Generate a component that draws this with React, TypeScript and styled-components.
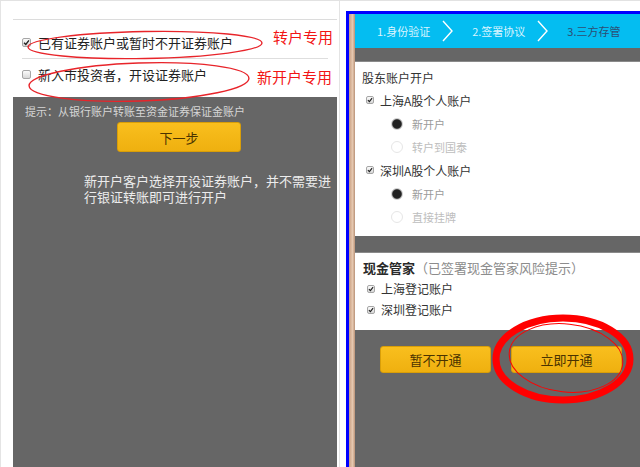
import React from 'react';
import styled, { createGlobalStyle } from 'styled-components';

/** Style */

const GlobalStyle = createGlobalStyle`
  html, body {
    margin: 0;
    padding: 0;
    background: #fff;
    overflow: hidden;
  }
  body {
    font-family: "Noto Sans CJK SC", "Liberation Sans", sans-serif;
    -webkit-font-smoothing: antialiased;
  }
`;

const Stage = styled.div`
  position: relative;
  width: 640px;
  height: 467px;
  overflow: hidden;
  display: flex;
  flex-flow: row nowrap;
  border-top: 1px solid #e2e2e2;
  box-sizing: border-box;
`;

/* ---- left screenshot ---- */

const LeftShot = styled.div`
  width: 345px;
  height: 100%;
  box-sizing: border-box;
  border-left: 1px solid #e4e4e4;
  padding: 0 8px 0 12px;
  display: flex;
  flex-direction: column;
  box-shadow: inset -5px 0 0 #fff, inset -6px 0 0 #e4e4e4;
`;

const TopSpace = styled.div`
  height: 18px;
  border-bottom: 1px solid #dcdcdc;
`;

const OptionRow = styled.label<{ $pad: string; $line?: boolean }>`
  display: flex;
  align-items: center;
  gap: 7px;
  height: ${(p) => (p.$line ? 39 : 38)}px;
  padding: ${(p) => p.$pad};
  margin: 0 9px;
  box-sizing: border-box;
  border-bottom: ${(p) => (p.$line ? '1px solid #dedede' : 'none')};
  font-size: 13px;
  color: #222;
  white-space: nowrap;
`;

const GrayPanel = styled.div`
  flex: 1;
  background: #666;
  padding: 7px 0 0 0;
  display: flex;
  flex-direction: column;
`;

const Tip = styled.div`
  padding-left: 12px;
  font-size: 11px;
  line-height: 14px;
  color: #d6d6d6;
`;

const YellowButton = styled.button<{ $w: number; $h: number }>`
  width: ${(p) => p.$w}px;
  height: ${(p) => p.$h}px;
  padding: 0;
  border: 1px solid #d99e08;
  border-radius: 3px;
  background: linear-gradient(#f9bf1e, #efb00f);
  color: #4a3300;
  font-family: inherit;
  font-size: 13px;
  cursor: pointer;
`;

const NextWrap = styled.div`
  margin: 4px 0 0 104px;
`;

const Explain = styled.p`
  margin: 21px 0 0 71px;
  width: 250px;
  font-size: 13px;
  line-height: 16px;
  color: #ececec;
`;

/* ---- right screenshot ---- */

const RightShot = styled.div`
  width: 295px;
  height: 100%;
  padding: 10px 0 0 1px;
  box-sizing: border-box;
  display: flex;
  background: #fff;
`;

const Frame = styled.div`
  flex: 1;
  min-width: 0;
  border-top: 3px solid #0000ff;
  border-left: 3px solid #0000ff;
  display: flex;
`;

const TanStripe = styled.div`
  width: 6px;
  flex-shrink: 0;
  background: linear-gradient(90deg, #c89e80, #e6c8b0 60%, #b99277);
`;

const Phone = styled.div`
  flex: 1;
  min-width: 0;
  display: flex;
  flex-direction: column;
  background: #666;
`;

const StepBar = styled.div`
  height: 34px;
  background: #04bdf1;
  display: flex;
  align-items: center;
  padding-left: 22px;
  overflow: hidden;
`;

const Step = styled.span<{ $current?: boolean }>`
  font-size: 11px;
  color: ${(p) => (p.$current ? '#2d4d73' : '#d9f4ff')};
  white-space: nowrap;
`;

const Chevron = styled.svg`
  width: 11px;
  height: 22px;
  margin: 0 19px 0 12px;
  flex-shrink: 0;
`;

const GrayGap = styled.div<{ $h: number }>`
  height: ${(p) => p.$h}px;
  background: #666;
  border-bottom: 1px solid #8a8a8a;
  box-sizing: border-box;
`;

const WhiteBlock = styled.div<{ $pad: string }>`
  background: #fff;
  padding: ${(p) => p.$pad};
`;

const BlockTitle = styled.div`
  font-size: 12px;
  line-height: 16px;
  color: #333;
  white-space: nowrap;

  b {
    font-size: 13px;
    color: #2a2a2a;
  }

  span {
    font-size: 13px;
    color: #8c8c8c;
  }
`;

const CheckLine = styled.div<{ $h: number }>`
  display: flex;
  align-items: center;
  gap: 6px;
  height: ${(p) => p.$h}px;
  padding-left: 4px;
  font-size: 12px;
  color: #333;
`;

const RadioLine = styled.div<{ $muted?: boolean }>`
  display: flex;
  align-items: center;
  gap: 9px;
  height: 23px;
  padding-left: 29px;
  font-size: 11px;
  color: ${(p) => (p.$muted ? '#bdbdbd' : '#9a9a9a')};
`;

const Radio = styled.span<{ $on?: boolean }>`
  width: 12px;
  height: 12px;
  border-radius: 50%;
  box-sizing: border-box;
  background: ${(p) => (p.$on ? 'radial-gradient(circle, #222 55%, #555 70%, #ddd 100%)' : '#fff')};
  border: 1px solid ${(p) => (p.$on ? '#cfcfcf' : '#e6e6e6')};
`;

const BottomArea = styled.div`
  flex: 1;
  background: #666;
  display: flex;
  gap: 20px;
  padding: 16px 0 0 25px;
  align-items: flex-start;
`;

const BoxWrap = styled.span<{ $size: number }>`
  width: ${(p) => p.$size}px;
  height: ${(p) => p.$size}px;
  box-sizing: border-box;
  border: 1px solid #a6a6a6;
  border-radius: 2px;
  background: linear-gradient(#fbfbfb, #d8d8d8);
  display: inline-flex;
  align-items: center;
  justify-content: center;
  flex-shrink: 0;
`;

/* ---- annotation layer ---- */

const Marks = styled.svg`
  position: absolute;
  left: 0;
  top: 0;
  pointer-events: none;
`;

const RedNote = styled.span<{ $x: number; $y: number }>`
  position: absolute;
  left: ${(p) => p.$x}px;
  top: ${(p) => p.$y}px;
  font-size: 15px;
  line-height: 18px;
  color: #f21515;
  white-space: nowrap;
`;

/** End */

const CheckBox = ({ checked, size = 9 }: { checked?: boolean; size?: number }) => (
  <BoxWrap $size={size}>
    {checked && (
      <svg width={size - 2} height={size - 2} viewBox="0 0 8 8">
        <path d="M1.2 4.2 L3.2 6.2 L6.8 1.6" fill="none" stroke="#222" strokeWidth="1.6" />
      </svg>
    )}
  </BoxWrap>
);

const Arrow = () => (
  <Chevron viewBox="0 0 11 22">
    <path d="M1 1 L10 11 L1 21" fill="none" stroke="#fff" strokeWidth="1.4" />
  </Chevron>
);

export default function App() {
  return (
    <>
      <GlobalStyle />
      <Stage>
        <LeftShot>
          <TopSpace />
          <OptionRow $line $pad="6px 0 0 0">
            <CheckBox checked />
            已有证券账户或暂时不开证券账户
          </OptionRow>
          <OptionRow $pad="0 0 8px 0">
            <CheckBox />
            新入市投资者，开设证券账户
          </OptionRow>
          <GrayPanel>
            <Tip>提示：从银行账户转账至资金证券保证金账户</Tip>
            <NextWrap>
              <YellowButton $w={124} $h={30}>下一步</YellowButton>
            </NextWrap>
            <Explain>新开户客户选择开设证券账户，并不需要进行银证转账即可进行开户</Explain>
          </GrayPanel>
        </LeftShot>

        <RightShot>
          <Frame>
            <TanStripe />
            <Phone>
              <StepBar>
                <Step>1.身份验证</Step>
                <Arrow />
                <Step>2.签署协议</Step>
                <Arrow />
                <Step $current>3.三方存管</Step>
              </StepBar>
              <GrayGap $h={14} />
              <WhiteBlock $pad="8px 0 8px 7px">
                <BlockTitle>股东账户开户</BlockTitle>
                <CheckLine $h={24} style={{ marginTop: 2 }}>
                  <CheckBox checked size={8} />
                  上海A股个人账户
                </CheckLine>
                <RadioLine>
                  <Radio $on />
                  新开户
                </RadioLine>
                <RadioLine $muted>
                  <Radio />
                  转户到国泰
                </RadioLine>
                <CheckLine $h={24}>
                  <CheckBox checked size={8} />
                  深圳A股个人账户
                </CheckLine>
                <RadioLine>
                  <Radio $on />
                  新开户
                </RadioLine>
                <RadioLine $muted>
                  <Radio />
                  直接挂牌
                </RadioLine>
              </WhiteBlock>
              <GrayGap $h={17} />
              <WhiteBlock $pad="7px 0 10px 8px">
                <BlockTitle>
                  <b>现金管家</b>
                  <span>（已签署现金管家风险提示）</span>
                </BlockTitle>
                <CheckLine $h={21} style={{ marginTop: 2 }}>
                  <CheckBox checked size={8} />
                  上海登记账户
                </CheckLine>
                <CheckLine $h={21}>
                  <CheckBox checked size={8} />
                  深圳登记账户
                </CheckLine>
              </WhiteBlock>
              <BottomArea>
                <YellowButton $w={111} $h={27}>暂不开通</YellowButton>
                <YellowButton $w={111} $h={27}>立即开通</YellowButton>
              </BottomArea>
            </Phone>
          </Frame>
        </RightShot>

        <Marks width="640" height="467" viewBox="0 0 640 467">
          <ellipse cx="145" cy="44" rx="117" ry="13.5" fill="none" stroke="#e8242a" strokeWidth="1.4" transform="rotate(-1 145 44)" />
          <ellipse cx="139" cy="81" rx="110" ry="19" fill="none" stroke="#e8242a" strokeWidth="1.4" transform="rotate(-2 139 81)" />
          <ellipse cx="563" cy="358" rx="67" ry="41" fill="none" stroke="#f00" strokeWidth="7" />
          <ellipse cx="566" cy="357" rx="57" ry="34" fill="none" stroke="#f00" strokeWidth="1" transform="rotate(6 566 357)" />
        </Marks>
        <RedNote $x={273} $y={27}>转户专用</RedNote>
        <RedNote $x={257} $y={67}>新开户专用</RedNote>
      </Stage>
    </>
  );
}
